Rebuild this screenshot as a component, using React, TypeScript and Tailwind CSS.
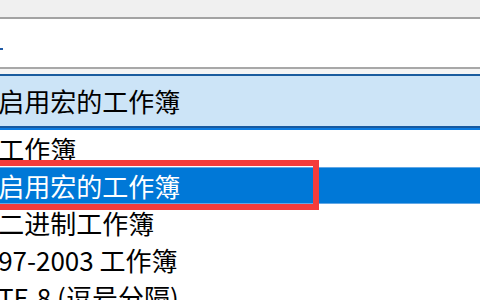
import React from "react";

const font = { fontFamily: '"Noto Sans CJK SC", "Noto Sans", sans-serif' };

export default function App() {
  const rows = [
    { t: "Excel 工作簿", sel: false },
    { t: "Excel 启用宏的工作簿", sel: true },
    { t: "Excel 二进制工作簿", sel: false },
    { t: "Excel 97-2003 工作簿", sel: false },
    { t: "CSV UTF-8 (逗号分隔)", sel: false },
  ];
  return (
    <div className="w-[480px] h-[300px] overflow-hidden bg-white relative" style={font}>
      <div className="h-[17px] bg-[#f0f0f0] border-b-2 border-[#a3a3a3] box-content" />
      <div className="h-[50px] pt-[29px] bg-white border-b-2 border-[#a8a8a8] box-border">
        <div className="h-[2px] w-[3px] bg-[#1f5aa6]" />
      </div>
      <div className="h-[5px] bg-[#f4f4f4]" />
      <div className="h-[50px] bg-[#cce4f7] border-t-2 border-[#1a5c9e] box-content flex items-center">
        <span className="ml-[-69px] text-[26px] leading-none text-black whitespace-nowrap">Excel 启用宏的工作簿</span>
      </div>
      <div className="h-[2px] bg-[#1659a0]" />
      <div className="h-[2px] bg-[#0a7ae0]" />
      <div className="flex flex-col">
        {rows.map((r, i) => (
          <div
            key={i}
            className={
              r.sel
                ? "h-[37px] flex items-center bg-[#0078d7] text-white border-y border-[#62a8e6]"
                : "h-[37px] flex items-center bg-white text-black"
            }
          >
            <span className={(r.t.startsWith("CSV") ? "ml-[-73px]" : "ml-[-69px]") + " text-[26px] leading-none whitespace-nowrap"}>
              {r.t}
            </span>
          </div>
        ))}
      </div>
      <div className="absolute left-[-10px] top-[160px] w-[329px] h-[50px] border-[6px] border-[#f43c3c]" />
    </div>
  );
}
